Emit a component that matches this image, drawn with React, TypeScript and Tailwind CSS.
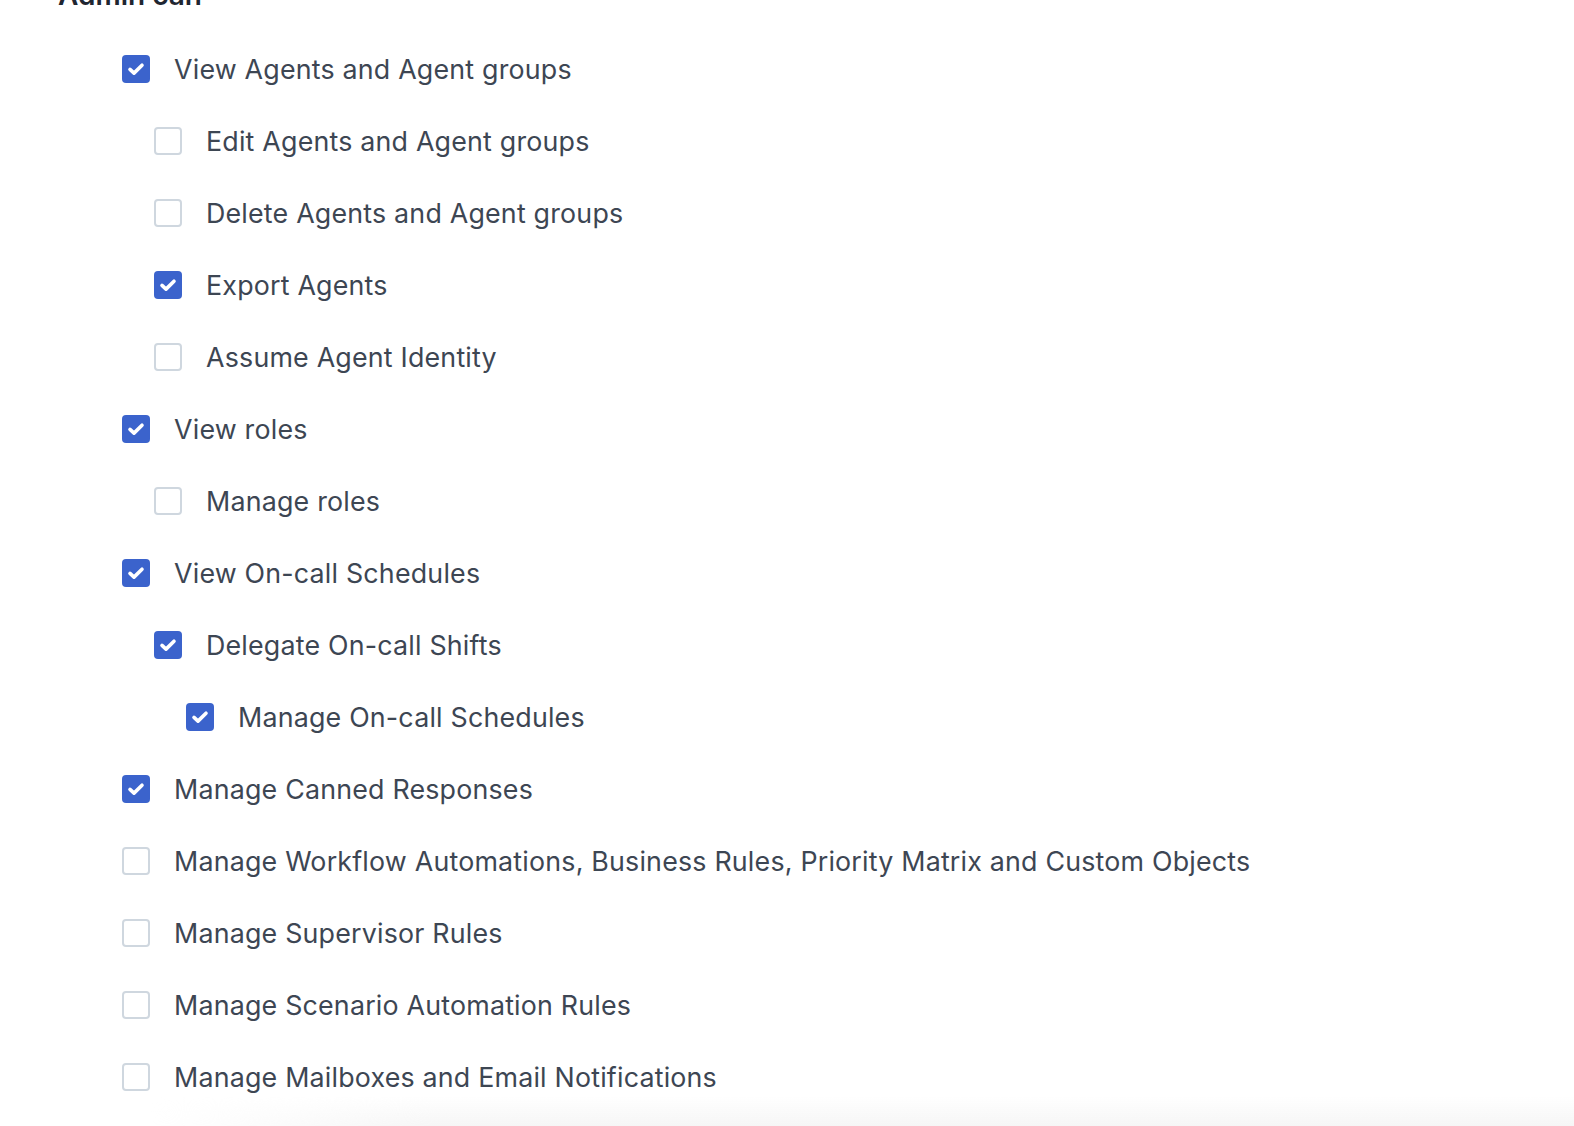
import { ReactNode } from "react";

type Perm = { label: string; level: 0 | 1 | 2; checked: boolean };

const PERMISSIONS: Perm[] = [
  { label: "View Agents and Agent groups", level: 0, checked: true },
  { label: "Edit Agents and Agent groups", level: 1, checked: false },
  { label: "Delete Agents and Agent groups", level: 1, checked: false },
  { label: "Export Agents", level: 1, checked: true },
  { label: "Assume Agent Identity", level: 1, checked: false },
  { label: "View roles", level: 0, checked: true },
  { label: "Manage roles", level: 1, checked: false },
  { label: "View On-call Schedules", level: 0, checked: true },
  { label: "Delegate On-call Shifts", level: 1, checked: true },
  { label: "Manage On-call Schedules", level: 2, checked: true },
  { label: "Manage Canned Responses", level: 0, checked: true },
  { label: "Manage Workflow Automations, Business Rules, Priority Matrix and Custom Objects", level: 0, checked: false },
  { label: "Manage Supervisor Rules", level: 0, checked: false },
  { label: "Manage Scenario Automation Rules", level: 0, checked: false },
  { label: "Manage Mailboxes and Email Notifications", level: 0, checked: false },
];

const indent = ["pl-[122px]", "pl-[154px]", "pl-[186px]"];

function Checkbox({ checked }: { checked: boolean }) {
  if (checked) {
    return (
      <span className="flex h-7 w-7 shrink-0 items-center justify-center rounded-[4px] bg-[#3b63cc]">
        <svg width="20" height="20" viewBox="0 0 20 20" fill="none">
          <path d="M4 10.4l4 3.7L16 6.2" stroke="#fff" strokeWidth="3.6" strokeLinecap="round" strokeLinejoin="round" />
        </svg>
      </span>
    );
  }
  return <span className="h-7 w-7 shrink-0 rounded-[4px] border-2 border-[#cfd7df] bg-white" />;
}

function Row({ level, children, checked }: { level: number; checked: boolean; children: ReactNode }) {
  return (
    <li className={`flex h-[72px] items-center gap-6 ${indent[level]}`}>
      <Checkbox checked={checked} />
      <span className="text-[26.8px] tracking-[0.2px] text-[#3d4653]">{children}</span>
    </li>
  );
}

export default function App() {
  return (
    <div className="relative h-[1126px] overflow-hidden bg-white font-['Inter','Noto_Sans',sans-serif]">
      <h2 className="-mt-[22px] pl-[58px] text-[28px] leading-[34px] font-semibold text-[#1f2631]">Admin can</h2>
      <ul className="mt-[21.4px]">
        {PERMISSIONS.map((p) => (
          <Row key={p.label} level={p.level} checked={p.checked}>
            {p.label}
          </Row>
        ))}
      </ul>
      {/* faint footer shadow creeping in from the bottom edge */}
      <div className="pointer-events-none absolute bottom-0 left-[150px] right-0 h-[30px] bg-gradient-to-b from-transparent to-[#f6f6f6] [mask-image:linear-gradient(to_right,transparent,black_20%)]" />
    </div>
  );
}
